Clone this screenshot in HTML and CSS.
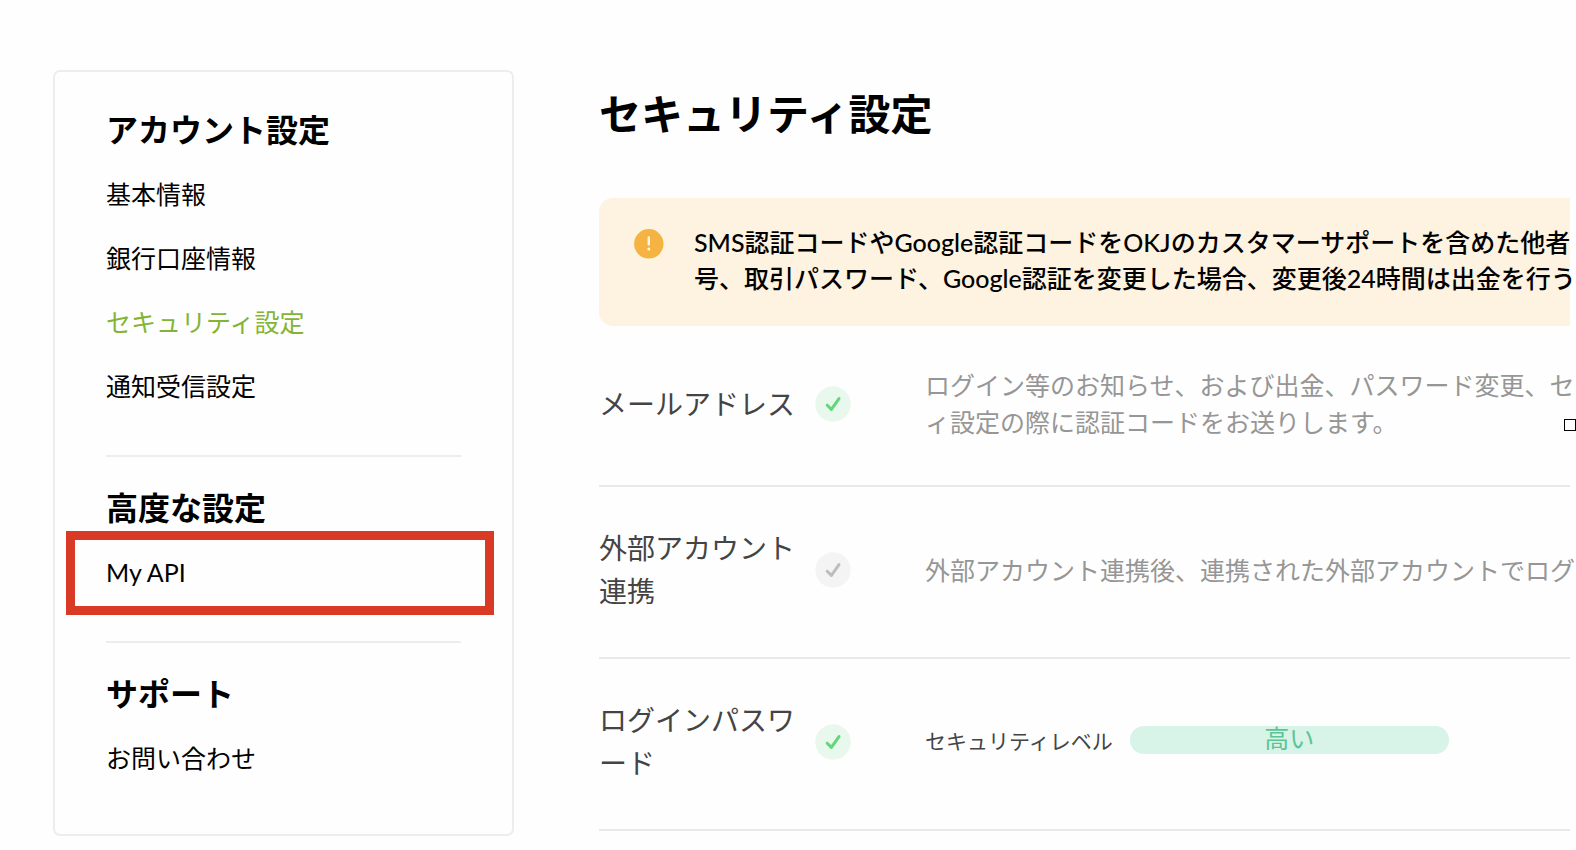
FILE: index.html
```html
<!DOCTYPE html>
<html lang="ja">
<head>
<meta charset="utf-8">
<title>セキュリティ設定</title>
<link rel="stylesheet" href="styles.css">
</head>
<body>
<div class="page">
  <nav class="sidebar" aria-label="アカウントメニュー">
    <section class="group">
      <h2 class="group-title">アカウント設定</h2>
      <a class="item" href="#">基本情報</a>
      <a class="item" href="#">銀行口座情報</a>
      <a class="item item-active" href="#">セキュリティ設定</a>
      <a class="item" href="#">通知受信設定</a>
    </section>
    <section class="group">
      <h2 class="group-title">高度な設定</h2>
      <a class="item item-marked" href="#">My API</a>
    </section>
    <section class="group">
      <h2 class="group-title">サポート</h2>
      <a class="item" href="#">お問い合わせ</a>
    </section>
  </nav>

  <main class="content">
    <h1 class="title">セキュリティ設定</h1>

    <div class="notice">
      <svg class="notice-icon" viewBox="0 0 30 30" aria-hidden="true">
        <circle cx="14.8" cy="14.8" r="14.7" fill="#f5b341"/>
        <path d="M14.8 8.4v6.8" stroke="#fff7e6" stroke-width="2.4" stroke-linecap="round"/>
        <circle cx="14.8" cy="20" r="1.5" fill="#fff7e6"/>
      </svg>
      <p class="notice-text">SMS認証コードやGoogle認証コードをOKJのカスタマーサポートを含めた他者<br>号、取引パスワード、Google認証を変更した場合、変更後24時間は出金を行う</p>
    </div>

    <section class="row">
      <h3 class="row-label">メールアドレス</h3>
      <svg class="status status-on" viewBox="0 0 36 36" aria-hidden="true">
        <circle class="status-disc" cx="18" cy="18" r="17.7"/>
        <path class="status-tick" d="M12.2 19.2l4.2 4.2L24 12.6"/>
      </svg>
      <p class="row-text">ログイン等のお知らせ、および出金、パスワード変更、セ<br>ィ設定の際に認証コードをお送りします。</p>
    </section>

    <section class="row">
      <h3 class="row-label">外部アカウント連携</h3>
      <svg class="status" viewBox="0 0 36 36" aria-hidden="true">
        <circle class="status-disc" cx="18" cy="18" r="17.7"/>
        <path class="status-tick" d="M12.2 19.2l4.2 4.2L24 12.6"/>
      </svg>
      <p class="row-text">外部アカウント連携後、連携された外部アカウントでログ</p>
    </section>

    <section class="row">
      <h3 class="row-label">ログインパスワード</h3>
      <svg class="status status-on" viewBox="0 0 36 36" aria-hidden="true">
        <circle class="status-disc" cx="18" cy="18" r="17.7"/>
        <path class="status-tick" d="M12.2 19.2l4.2 4.2L24 12.6"/>
      </svg>
      <div class="level">
        <span class="level-label">セキュリティレベル</span>
        <span class="level-bar">高い</span>
      </div>
    </section>
  </main>
</div>
<span class="handle"></span>
</body>
</html>
```

FILE: styles.css
```css
* {
  box-sizing: border-box;
}

body {
  position: relative;
  margin: 0;
  overflow-x: hidden;
  background: #fefefe;
  color: #000;
  font-family: Lato, "Noto Sans CJK JP", sans-serif;
  font-size: 25px;
}

h1,
h2,
h3,
p {
  margin: 0;
}

.page {
  display: flex;
  align-items: flex-start;
  gap: 85px;
  padding: 70px 6px 14px 53px;
}

/* Side menu */
.sidebar {
  flex: none;
  width: 461px;
  padding: 26px 51px 7px;
  border: 2px solid #ededed;
  border-radius: 7px;
}

.group {
  padding-bottom: 37px;
}

.group + .group {
  padding-top: 19px;
  border-top: 2px solid #ededed;
}

.group-title {
  font-size: 32px;
  font-weight: 700;
  line-height: 64px;
}

.item {
  display: block;
  color: #000;
  line-height: 64px;
  text-decoration: none;
}

.item-active {
  color: #84b435;
}

.item-marked {
  position: relative;
}

.item-marked::after {
  content: "";
  position: absolute;
  inset: -9px -33px -11px -40px;
  border: 9px solid #d93a26;
}

/* Main column */
.content {
  flex: 1;
  min-width: 0;
  padding-top: 14px;
}

.title {
  margin-bottom: 54px;
  font-size: 42px;
  font-weight: 700;
  line-height: 60px;
}

.notice {
  display: flex;
  gap: 30px;
  margin-bottom: 1px;
  padding: 26px 0 30px 35px;
  border-radius: 14px 0 0 14px;
  background: #fdf3e0;
}

.notice-icon {
  flex: none;
  width: 30px;
  height: 30px;
  margin-top: 5px;
}

.notice-text {
  font-weight: 500;
  line-height: 36px;
  white-space: nowrap;
}

.row {
  display: grid;
  grid-template-columns: 198px 36px minmax(0, 1fr);
  align-items: center;
  column-gap: 18px;
  padding: 40px 0 44px;
  border-bottom: 2px solid #e9e9e9;
}

.row-label {
  color: #444;
  font-size: 28px;
  font-weight: 400;
  line-height: 43px;
}

.status {
  width: 36px;
  height: 36px;
}

.status-disc {
  fill: #f4f4f4;
}

.status-tick {
  fill: none;
  stroke: #bdbdbd;
  stroke-width: 3;
  stroke-linecap: round;
  stroke-linejoin: round;
}

.status-on .status-disc {
  fill: #e8f8ec;
}

.status-on .status-tick {
  stroke: #62d67c;
}

.row-text,
.level {
  padding-left: 56px;
}

.row-text {
  color: #969696;
  line-height: 37px;
  white-space: nowrap;
}

.level {
  display: flex;
  align-items: center;
  gap: 17px;
  padding-bottom: 5px;
}

.level-label {
  color: #444;
  font-size: 21px;
}

.level-bar {
  width: 319px;
  padding-bottom: 4px;
  border-radius: 14px;
  background: #d8f3e8;
  color: #5cc596;
  line-height: 24px;
  text-align: center;
}

/* Resize handle on the right edge */
.handle {
  position: absolute;
  top: 419px;
  right: 0;
  width: 12px;
  height: 12px;
  border: 1px solid #000;
  background: #fff;
}
```
